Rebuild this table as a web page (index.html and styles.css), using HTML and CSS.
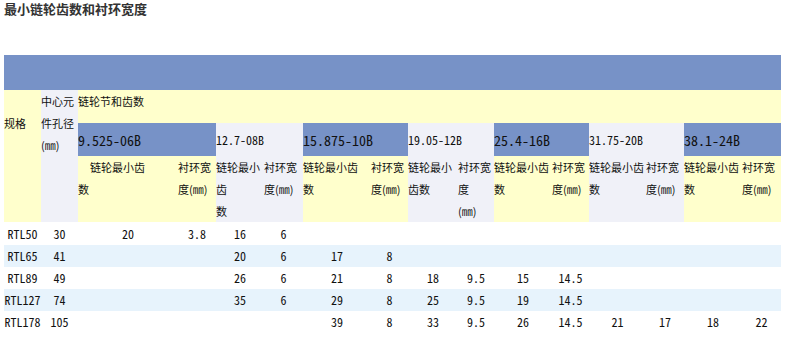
FILE: index.html
```html
<!DOCTYPE html>
<html lang="zh-CN">
<head>
<meta charset="utf-8">
<title>最小链轮齿数和衬环宽度</title>
<link rel="stylesheet" href="styles.css">
</head>
<body>
<div class="page">
  <h3 class="title">最小链轮齿数和衬环宽度</h3>
  <table class="spec">
    <colgroup>
      <col class="w37"><col class="w37">
      <col class="w100"><col class="w38">
      <col class="w48"><col class="w39">
      <col class="w68"><col class="w37">
      <col class="w50"><col class="w36">
      <col class="w58"><col class="w37">
      <col class="w57"><col class="w38">
      <col class="w58"><col class="w39">
    </colgroup>
    <tr class="r-top"><td colspan="16" class="blue"></td></tr>
    <tr class="r-h1">
      <td rowspan="2" class="yellow hd mid">规格</td>
      <td rowspan="2" class="grey hd mid">中心元<br>件孔径<br>(㎜)</td>
      <td colspan="14" class="yellow hd">链轮节和齿数</td>
    </tr>
    <tr class="r-h2">
      <td colspan="2" class="blue pitch big">9.525-06B</td>
      <td colspan="2" class="grey pitch">12.7-08B</td>
      <td colspan="2" class="blue pitch big">15.875-10B</td>
      <td colspan="2" class="grey pitch">19.05-12B</td>
      <td colspan="2" class="blue pitch big">25.4-16B</td>
      <td colspan="2" class="grey pitch">31.75-20B</td>
      <td colspan="2" class="blue pitch big">38.1-24B</td>
    </tr>
    <tr class="r-h3">
      <td class="yellow"></td>
      <td class="grey"></td>
      <td class="yellow hd"><span class="indent">链轮最小齿</span><br>数</td>
      <td class="yellow hd">衬环宽<br>度(㎜)</td>
      <td class="grey hd">链轮最小<br>齿<br>数</td>
      <td class="grey hd">衬环宽<br>度(㎜)</td>
      <td class="yellow hd">链轮最小齿<br>数</td>
      <td class="yellow hd">衬环宽<br>度(㎜)</td>
      <td class="grey hd">链轮最小<br>齿数</td>
      <td class="grey hd">衬环宽<br>度<br>(㎜)</td>
      <td class="yellow hd">链轮最小齿<br>数</td>
      <td class="yellow hd">衬环宽<br>度(㎜)</td>
      <td class="grey hd">链轮最小齿<br>数</td>
      <td class="grey hd">衬环宽<br>度(㎜)</td>
      <td class="yellow hd">链轮最小齿<br>数</td>
      <td class="yellow hd">衬环宽<br>度(㎜)</td>
    </tr>
    <tr class="row first">
      <td>RTL50</td><td>30</td>
      <td>20</td><td>3.8</td>
      <td>16</td><td>6</td>
      <td></td><td></td><td></td><td></td><td></td><td></td><td></td><td></td><td></td><td></td>
    </tr>
    <tr class="row alt">
      <td>RTL65</td><td>41</td>
      <td></td><td></td>
      <td>20</td><td>6</td>
      <td>17</td><td>8</td>
      <td></td><td></td><td></td><td></td><td></td><td></td><td></td><td></td>
    </tr>
    <tr class="row">
      <td>RTL89</td><td>49</td>
      <td></td><td></td>
      <td>26</td><td>6</td>
      <td>21</td><td>8</td>
      <td>18</td><td>9.5</td>
      <td>15</td><td>14.5</td>
      <td></td><td></td><td></td><td></td>
    </tr>
    <tr class="row alt">
      <td>RTL127</td><td>74</td>
      <td></td><td></td>
      <td>35</td><td>6</td>
      <td>29</td><td>8</td>
      <td>25</td><td>9.5</td>
      <td>19</td><td>14.5</td>
      <td></td><td></td><td></td><td></td>
    </tr>
    <tr class="row">
      <td>RTL178</td><td>105</td>
      <td></td><td></td>
      <td></td><td></td>
      <td>39</td><td>8</td>
      <td>33</td><td>9.5</td>
      <td>26</td><td>14.5</td>
      <td>21</td><td>17</td>
      <td>18</td><td>22</td>
    </tr>
  </table>
</div>
</body>
</html>
```
FILE: styles.css
```css
html, body {
  margin: 0;
  padding: 0;
  background: #ffffff;
}

.page {
  padding: 0 4px;
}

.title {
  margin: 0;
  font-family: "Noto Sans CJK SC", "Liberation Sans", sans-serif;
  font-size: 13px;
  line-height: 17px;
  font-weight: bold;
  color: #333333;
}

.spec {
  margin-top: 38px;
  width: 777px;
  table-layout: fixed;
  border-collapse: collapse;
  border-spacing: 0;
  font-family: "Noto Sans Mono CJK SC", "Liberation Mono", "Noto Sans CJK SC", monospace;
  color: #111111;
}

.spec td {
  padding: 0;
  white-space: nowrap;
}

.w36 { width: 36px; }
.w37 { width: 37px; }
.w38 { width: 38px; }
.w39 { width: 39px; }
.w48 { width: 48px; }
.w50 { width: 50px; }
.w57 { width: 57px; }
.w58 { width: 58px; }
.w68 { width: 68px; }
.w100 { width: 100px; }

.blue { background: #7792c7; }
.yellow { background: #ffffcc; }
.grey { background: #f0f1f8; }

.r-top td { height: 35px; }
.r-h1 td { height: 33px; }
.r-h2 td { height: 33px; }
.r-h3 td { height: 66px; }

.hd {
  font-family: "Noto Sans CJK SC", "Liberation Sans", sans-serif;
  font-size: 11px;
  line-height: 22px;
  vertical-align: top;
  text-align: left;
  color: #111111;
}

.hd.mid {
  vertical-align: middle;
}

.indent {
  padding-left: 12px;
}

.pitch {
  font-size: 12px;
  line-height: 22px;
  vertical-align: middle;
  text-align: left;
  color: #111111;
}

.pitch.big {
  font-size: 14px;
}

.row td {
  height: 22px;
  font-size: 12px;
  line-height: 22px;
  text-align: center;
  vertical-align: middle;
  color: #111111;
}

.row.first td {
  height: 23px;
}

.row.alt td {
  background: #e7f3fc;
}
```
